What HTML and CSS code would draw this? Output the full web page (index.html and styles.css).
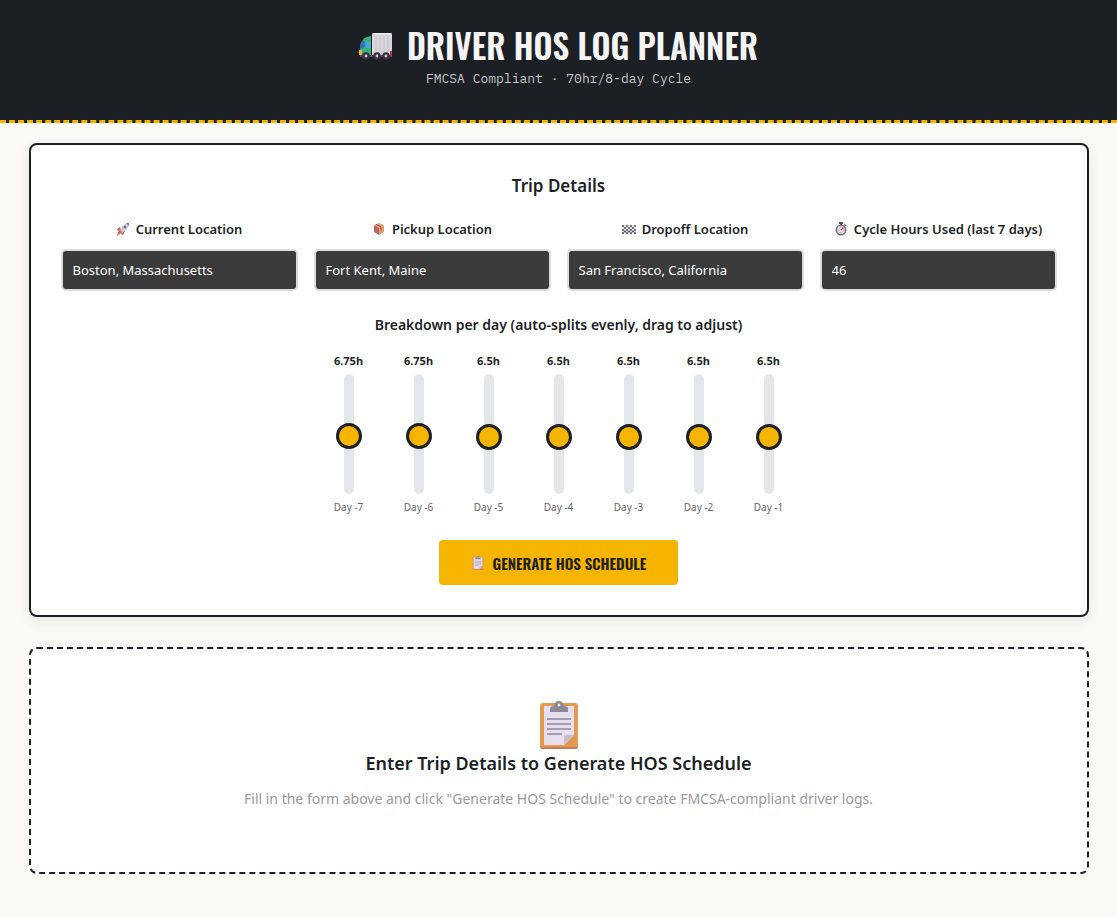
FILE: index.html
```html
<!DOCTYPE html>
<html lang="en">
<head>
    <meta charset="UTF-8">
    <meta name="viewport" content="width=device-width, initial-scale=1.0">
    <title>Driver HOS Log Planner</title>
    <link rel="stylesheet" href="styles.css">
</head>
<body>

<svg class="sprite" aria-hidden="true">
    <symbol id="clipboard" viewBox="0 0 38 48">
        <rect x="0" y="2" width="38" height="46" rx="3" fill="#e39a4e"/>
        <path d="M0 45a3 3 0 0 0 3 3h32a3 3 0 0 0 3-3l-1 1H1z" fill="#c97862"/>
        <path d="M4 5h30v29L24 44H4z" fill="#e7dff0"/>
        <path d="M24 44v-8q0-2 2-2h8z" fill="#c4bfc9"/>
        <path d="M10 11V8q0-3 4-3 1-5 5-5t5 5q4 0 4 3v3z" fill="#8d8994"/>
        <circle cx="19" cy="4" r="1.4" fill="#eee"/>
        <path d="M7 18h24M7 23h24M7 28h24M7 33h15" stroke="#8f8a96" stroke-width="1.600"/>
    </symbol>
</svg>

<header class="header">
    <h1>
        <svg class="truck" viewBox="0 0 34 27" aria-hidden="true">
            <path d="M13 2q0-2 2-2h16q2 0 2 2v20H13z" fill="#d9d7dc"/>
            <path d="M13 2q0-2 2-2h16q2 0 2 1H13z" fill="#f1f0f2"/>
            <path d="M17 3v17M21 3v17M25 3v17M29 3v17" stroke="#c0bec5" stroke-width="1"/>
            <path d="M3 9q1-4 5-5l4-1v20H1v-7q0-4 2-7z" fill="#37b377"/>
            <path d="M7 8h4v7H7z" fill="#4aa3df"/>
            <path d="M1 13q0-4 3-5l2 1v4q-2 3-5 3z" fill="#2f6fc0"/>
            <path d="M0 17h3v5H0z" fill="#f2b032"/>
            <path d="M31 18h2v4h-2z" fill="#d5303e"/>
            <path d="M1 22h32v2H1z" fill="#55505e"/>
            <g fill="#d0ccd6" stroke="#3b2f45" stroke-width="2.400">
                <circle cx="7" cy="23" r="2.600"/>
                <circle cx="18" cy="23" r="2.600"/>
                <circle cx="27" cy="23" r="2.600"/>
            </g>
        </svg>
        Driver HOS Log Planner
    </h1>
    <p>FMCSA Compliant · 70hr/8-day Cycle</p>
</header>

<main class="container">
    <form class="card">
        <h2>Trip Details</h2>

        <div class="form-grid">
            <div class="field">
                <label for="currentLocation">
                    <svg class="icon" viewBox="0 0 14 14" aria-hidden="true">
                        <path d="M4 5L1 7l1 2 3-1zM9 9l-2 4-2-1 1-3z" fill="#c8605c"/>
                        <path d="M4 9l2-5q3-3 7-3 0 4-3 7l-4 3z" fill="#cfcdd6"/>
                        <path d="M10 1l3 0v3z" fill="#cb5a58"/>
                        <circle cx="9" cy="5" r="1.5" fill="#5b7fae"/>
                        <path d="M4 8l2 2-2 2-3 2 1-4z" fill="#c8605c"/>
                        <path d="M3 11l1 1-3 2z" fill="#f5a623"/>
                    </svg>
                    Current Location
                </label>
                <input type="text" id="currentLocation" value="Boston, Massachusetts">
            </div>
            <div class="field">
                <label for="pickupLocation">
                    <svg class="icon" viewBox="0 0 14 14" aria-hidden="true">
                        <path d="M7 1l5 2-5 3-5-3z" fill="#e4a273"/>
                        <path d="M2 3l5 3v7l-5-3z" fill="#b9646a"/>
                        <path d="M12 3L7 6v7l5-3z" fill="#dd9a62"/>
                        <path d="M4 2.200l5 2.800v2.500" fill="none" stroke="#8f4f4c"/>
                    </svg>
                    Pickup Location
                </label>
                <input type="text" id="pickupLocation" value="Fort Kent, Maine">
            </div>
            <div class="field">
                <label for="dropoffLocation">
                    <svg class="icon" viewBox="0 0 14 14" aria-hidden="true">
                        <path d="M0 3h14v9H0z" fill="#e8e6ea"/>
                        <path d="M0 4h14M0 8h14M0 11h14" stroke="#4c4853" stroke-width="1.500" stroke-dasharray="2 2"/>
                        <path d="M2 6h12M2 9.500h12" stroke="#4c4853" stroke-width="1.500" stroke-dasharray="2 2"/>
                    </svg>
                    Dropoff Location
                </label>
                <input type="text" id="dropoffLocation" value="San Francisco, California">
            </div>
            <div class="field">
                <label for="cycleHours">
                    <svg class="icon" viewBox="0 0 14 14" aria-hidden="true">
                        <path d="M5 0h4v2H5zM6 1h2v3H6zM11 2l1.500 1.500-1 1L10 3z" fill="#55515b"/>
                        <circle cx="7" cy="8" r="4.700" fill="#e3e0e8" stroke="#77727e" stroke-width="1.600"/>
                        <path d="M7 8l2.500-2.500" stroke="#cf3f45" stroke-width="1.200"/>
                        <path d="M7 4.500v1M7 10.500v1M3.500 8h1M9.500 8h1" stroke="#8b8792"/>
                    </svg>
                    Cycle Hours Used (last 7 days)
                </label>
                <input type="text" inputmode="numeric" id="cycleHours" value="46">
            </div>
        </div>

        <h3 class="breakdown-title">Breakdown per day (auto-splits evenly, drag to adjust)</h3>

        <div class="sliders">
            <div class="day">
                <output for="day7">6.75h</output>
                <input type="range" id="day7" min="0" max="14" step="0.25" value="6.75">
                <label for="day7">Day -7</label>
            </div>
            <div class="day">
                <output for="day6">6.75h</output>
                <input type="range" id="day6" min="0" max="14" step="0.25" value="6.75">
                <label for="day6">Day -6</label>
            </div>
            <div class="day">
                <output for="day5">6.5h</output>
                <input type="range" id="day5" min="0" max="14" step="0.25" value="6.5">
                <label for="day5">Day -5</label>
            </div>
            <div class="day">
                <output for="day4">6.5h</output>
                <input type="range" id="day4" min="0" max="14" step="0.25" value="6.5">
                <label for="day4">Day -4</label>
            </div>
            <div class="day">
                <output for="day3">6.5h</output>
                <input type="range" id="day3" min="0" max="14" step="0.25" value="6.5">
                <label for="day3">Day -3</label>
            </div>
            <div class="day">
                <output for="day2">6.5h</output>
                <input type="range" id="day2" min="0" max="14" step="0.25" value="6.5">
                <label for="day2">Day -2</label>
            </div>
            <div class="day">
                <output for="day1">6.5h</output>
                <input type="range" id="day1" min="0" max="14" step="0.25" value="6.5">
                <label for="day1">Day -1</label>
            </div>
        </div>

        <button type="button" class="generate-btn">
            <svg class="icon" aria-hidden="true"><use href="#clipboard"/></svg>
            Generate HOS Schedule
        </button>
    </form>

    <section class="empty-state">
        <svg class="empty-icon" aria-hidden="true"><use href="#clipboard"/></svg>
        <h2>Enter Trip Details to Generate HOS Schedule</h2>
        <p>Fill in the form above and click "Generate HOS Schedule" to create FMCSA-compliant driver logs.</p>
    </section>
</main>

<script>
    // show the hours of a day while its slider moves
    document.querySelectorAll('.day').forEach((day) => {
        const slider = day.querySelector('input');
        slider.addEventListener('input', () => {
            day.querySelector('output').textContent = slider.value + 'h';
        });
    });
</script>
</body>
</html>
```

FILE: styles.css
```css
* {
    box-sizing: border-box;
}
body {
    margin: 0;
    background-color: #faf9f5;
    color: #1c1f24;
    font-family: "Segoe UI", "Noto Sans", sans-serif;
    font-size: 14px;
    line-height: 20px;
}
h1, h2, h3, p {
    margin: 0;
}
.sprite {
    display: none;
}
.header {
    padding: 22px 20px 32px;
    background-color: #1c1f24;
    border-bottom: 3px dashed #f5b400;
    text-align: center;
}
.header h1 {
    display: flex;
    align-items: center;
    justify-content: center;
    gap: 14px;
    color: #f5f5f5;
    font-family: Oswald, "Liberation Sans Narrow", "Roboto Condensed", sans-serif;
    font-size: 33px;
    font-weight: 600;
    line-height: 48px;
    text-transform: uppercase;
}
.truck {
    width: 34px;
    height: 27px;
}
.header p {
    color: #c4c5c8;
    font-family: "IBM Plex Mono", "Liberation Mono", monospace;
    font-size: 13px;
    line-height: 18px;
}
.container {
    max-width: 1100px;
    margin: 0 auto;
    padding: 20px;
}
.card {
    padding: 30px;
    background-color: #fff;
    border: 2px solid #1c1f24;
    border-radius: 8px;
    box-shadow: 0 4px 12px rgba(0, 0, 0, 0.08);
    text-align: center;
}
.card h2 {
    font-size: 17px;
    font-weight: 600;
    line-height: 22px;
}
.form-grid {
    display: grid;
    grid-template-columns: repeat(4, 1fr);
    gap: 16px;
    margin-top: 22px;
}
.field label {
    display: flex;
    align-items: center;
    justify-content: center;
    gap: 6px;
    margin-bottom: 10px;
    font-size: 13px;
    font-weight: 600;
    white-space: nowrap;
}
.icon {
    flex: none;
    width: 14px;
    height: 14px;
}
.field input {
    display: block;
    width: 100%;
    height: 42px;
    padding: 10px;
    background-color: #3b3b3b;
    border: 2px solid #ddd;
    border-radius: 5px;
    color: #fff;
    font-family: inherit;
    font-size: 13px;
}
.breakdown-title {
    margin-top: 24px;
    font-size: 14px;
    font-weight: 600;
}
.sliders {
    display: flex;
    justify-content: center;
    gap: 20px;
    margin-top: 18px;
}
.day {
    display: flex;
    flex-direction: column;
    align-items: center;
    gap: 5px;
    width: 50px;
    line-height: 16px;
}
.day output {
    font-size: 11px;
    font-weight: 700;
}
.day label {
    color: #666;
    font-size: 10px;
}
.day input {
    -webkit-appearance: none;
    appearance: none;
    writing-mode: vertical-lr;
    direction: rtl;
    width: 26px;
    height: 120px;
    margin: 0;
    background: transparent;
    cursor: pointer;
}
.day input::-webkit-slider-runnable-track {
    width: 10px;
    background-color: #e3e7e9;
    border-radius: 5px;
}
.day input::-webkit-slider-thumb {
    -webkit-appearance: none;
    width: 26px;
    height: 26px;
    margin-left: -8px;
    background-color: #f5b400;
    border: 3px solid #1c1f24;
    border-radius: 50%;
}
.generate-btn {
    display: inline-flex;
    align-items: center;
    gap: 8px;
    height: 45px;
    margin-top: 25px;
    padding: 0 32px;
    background-color: #f5b400;
    border: none;
    border-radius: 4px;
    color: #1c1f24;
    font-family: Oswald, "Liberation Sans Narrow", "Roboto Condensed", sans-serif;
    font-size: 15px;
    font-weight: 600;
    text-transform: uppercase;
    vertical-align: top;
    cursor: pointer;
}
.empty-state {
    margin-top: 30px;
    padding: 52px 30px 63px;
    background-color: #fff;
    border: 2px dashed #1c1f24;
    border-radius: 8px;
    text-align: center;
}
.empty-state h2 {
    font-size: 18px;
    font-weight: 600;
    line-height: 24px;
}
.empty-icon {
    display: block;
    width: 38px;
    height: 48px;
    margin: 0 auto 2px;
}
.empty-state p {
    margin-top: 14px;
    color: #999;
    font-size: 14px;
}
```
